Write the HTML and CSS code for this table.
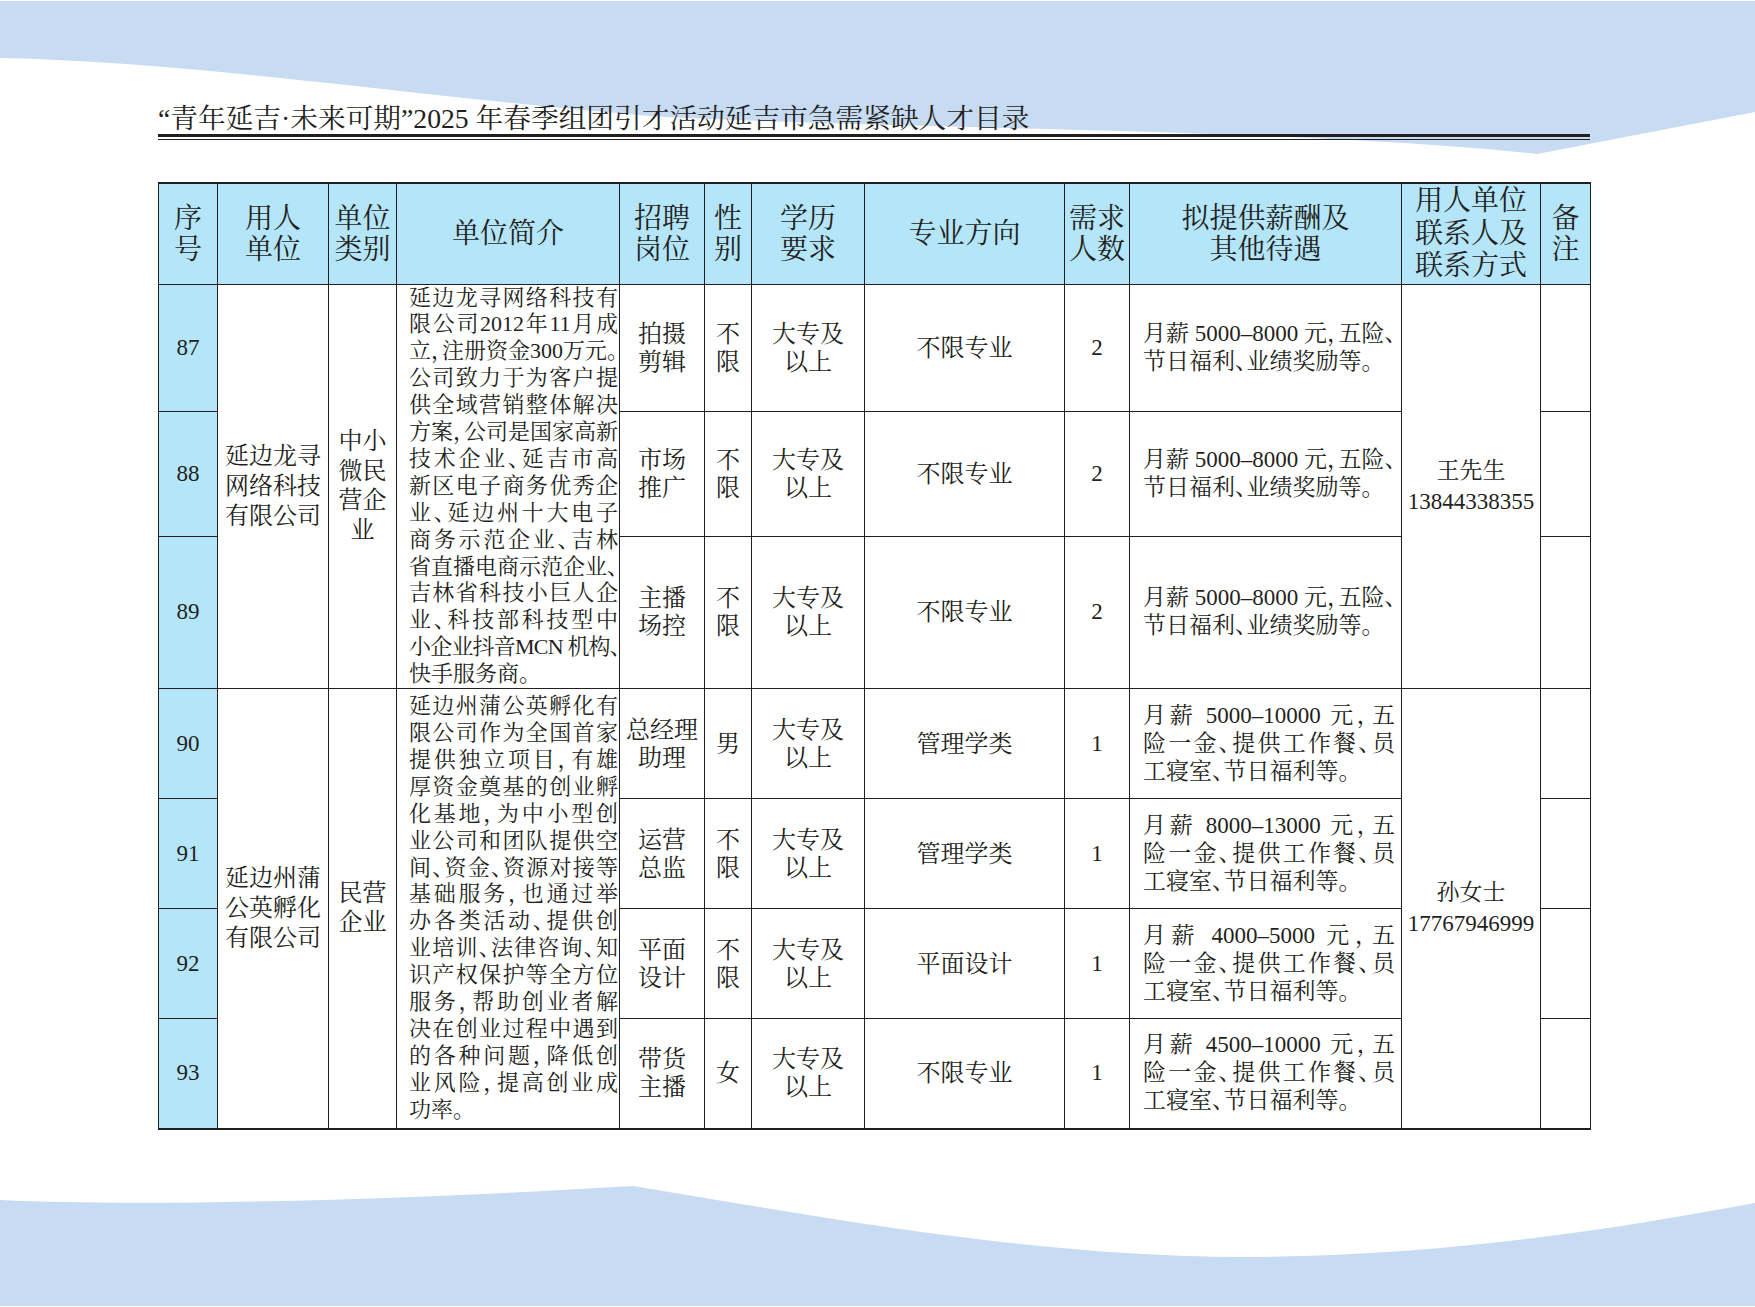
FILE: index.html
```html
<!DOCTYPE html>
<html lang="zh-CN">
<head>
<meta charset="utf-8">
<title>“青年延吉·未来可期”2025 年春季组团引才活动延吉市急需紧缺人才目录</title>
<link rel="stylesheet" href="styles.css">
</head>
<body>
<div class="page">
  <svg class="bg" width="1755" height="1307" viewBox="0 0 1755 1307" aria-hidden="true">
    <path class="wave" d="M0,1 H1755 V112 L1537,154 C1300,128 900,130 650,116 C400,95 200,62 0,58 Z"/>
    <path class="wave" d="M0,1200 C150,1207 400,1200 633,1186 C850,1222 1050,1258 1250,1257 C1450,1256 1620,1228 1755,1203 V1306 H0 Z"/>
  </svg>
  <div class="content">
    <h1 class="title">“青年延吉·未来可期”2025 年春季组团引才活动延吉市急需紧缺人才目录</h1>
    <div class="rule"></div>
    <table class="talent">
      <colgroup>
        <col class="c-seq"><col class="c-org"><col class="c-cat"><col class="c-desc"><col class="c-pos"><col class="c-sex"><col class="c-edu"><col class="c-major"><col class="c-num"><col class="c-pay"><col class="c-contact"><col class="c-note">
      </colgroup>
      <thead>
        <tr class="r-head">
          <th>序<br>号</th>
          <th>用人<br>单位</th>
          <th>单位<br>类别</th>
          <th>单位简介</th>
          <th>招聘<br>岗位</th>
          <th>性<br>别</th>
          <th>学历<br>要求</th>
          <th>专业方向</th>
          <th>需求<br>人数</th>
          <th>拟提供薪酬及<br>其他待遇</th>
          <th class="th3">用人单位<br>联系人及<br>联系方式</th>
          <th>备<br>注</th>
        </tr>
      </thead>
      <tbody>
        <tr class="r87">
          <td class="seq">87</td>
          <td class="org" rowspan="3">延边龙寻<br>网络科技<br>有限公司</td>
          <td class="cat" rowspan="3">中小<br>微民<br>营企<br>业</td>
          <td class="desc" rowspan="3">
            <span class="ln">延边龙寻网络科技有</span>
            <span class="ln">限公司2012年11月成</span>
            <span class="ln">立，注册资金300万元。</span>
            <span class="ln">公司致力于为客户提</span>
            <span class="ln">供全域营销整体解决</span>
            <span class="ln">方案，公司是国家高新</span>
            <span class="ln">技术企业、延吉市高</span>
            <span class="ln">新区电子商务优秀企</span>
            <span class="ln">业、延边州十大电子</span>
            <span class="ln">商务示范企业、吉林</span>
            <span class="ln">省直播电商示范企业、</span>
            <span class="ln">吉林省科技小巨人企</span>
            <span class="ln">业、科技部科技型中</span>
            <span class="ln tight">小企业抖音MCN 机构、</span>
            <span class="ln last">快手服务商。</span>
          </td>
          <td class="cell">拍摄<br>剪辑</td>
          <td class="cell">不<br>限</td>
          <td class="cell">大专及<br>以上</td>
          <td class="cell">不限专业</td>
          <td class="cell num">2</td>
          <td class="pay"><span class="ln">月薪 5000–8000 元，五险、</span><span class="ln last">节日福利、业绩奖励等。</span></td>
          <td class="contact" rowspan="3">王先生<br><span class="tel">13844338355</span></td>
          <td class="note"></td>
        </tr>
        <tr class="r88">
          <td class="seq">88</td>
          <td class="cell">市场<br>推广</td>
          <td class="cell">不<br>限</td>
          <td class="cell">大专及<br>以上</td>
          <td class="cell">不限专业</td>
          <td class="cell num">2</td>
          <td class="pay"><span class="ln">月薪 5000–8000 元，五险、</span><span class="ln last">节日福利、业绩奖励等。</span></td>
          <td class="note"></td>
        </tr>
        <tr class="r89">
          <td class="seq">89</td>
          <td class="cell">主播<br>场控</td>
          <td class="cell">不<br>限</td>
          <td class="cell">大专及<br>以上</td>
          <td class="cell">不限专业</td>
          <td class="cell num">2</td>
          <td class="pay"><span class="ln">月薪 5000–8000 元，五险、</span><span class="ln last">节日福利、业绩奖励等。</span></td>
          <td class="note"></td>
        </tr>
        <tr class="r9x">
          <td class="seq">90</td>
          <td class="org" rowspan="4">延边州蒲<br>公英孵化<br>有限公司</td>
          <td class="cat" rowspan="4">民营<br>企业</td>
          <td class="desc" rowspan="4">
            <span class="ln">延边州蒲公英孵化有</span>
            <span class="ln">限公司作为全国首家</span>
            <span class="ln">提供独立项目，有雄</span>
            <span class="ln">厚资金奠基的创业孵</span>
            <span class="ln">化基地，为中小型创</span>
            <span class="ln">业公司和团队提供空</span>
            <span class="ln">间、资金、资源对接等</span>
            <span class="ln">基础服务，也通过举</span>
            <span class="ln">办各类活动、提供创</span>
            <span class="ln">业培训、法律咨询、知</span>
            <span class="ln">识产权保护等全方位</span>
            <span class="ln">服务，帮助创业者解</span>
            <span class="ln">决在创业过程中遇到</span>
            <span class="ln">的各种问题，降低创</span>
            <span class="ln">业风险，提高创业成</span>
            <span class="ln last">功率。</span>
          </td>
          <td class="cell">总经理<br>助理</td>
          <td class="cell">男</td>
          <td class="cell">大专及<br>以上</td>
          <td class="cell">管理学类</td>
          <td class="cell num">1</td>
          <td class="pay"><span class="ln">月薪 5000–10000 元，五</span><span class="ln">险一金、提供工作餐、员</span><span class="ln last">工寝室、节日福利等。</span></td>
          <td class="contact" rowspan="4">孙女士<br><span class="tel">17767946999</span></td>
          <td class="note"></td>
        </tr>
        <tr class="r9x">
          <td class="seq">91</td>
          <td class="cell">运营<br>总监</td>
          <td class="cell">不<br>限</td>
          <td class="cell">大专及<br>以上</td>
          <td class="cell">管理学类</td>
          <td class="cell num">1</td>
          <td class="pay"><span class="ln">月薪 8000–13000 元，五</span><span class="ln">险一金、提供工作餐、员</span><span class="ln last">工寝室、节日福利等。</span></td>
          <td class="note"></td>
        </tr>
        <tr class="r9x">
          <td class="seq">92</td>
          <td class="cell">平面<br>设计</td>
          <td class="cell">不<br>限</td>
          <td class="cell">大专及<br>以上</td>
          <td class="cell">平面设计</td>
          <td class="cell num">1</td>
          <td class="pay"><span class="ln">月薪 4000–5000 元，五</span><span class="ln">险一金、提供工作餐、员</span><span class="ln last">工寝室、节日福利等。</span></td>
          <td class="note"></td>
        </tr>
        <tr class="r9x">
          <td class="seq">93</td>
          <td class="cell">带货<br>主播</td>
          <td class="cell">女</td>
          <td class="cell">大专及<br>以上</td>
          <td class="cell">不限专业</td>
          <td class="cell num">1</td>
          <td class="pay"><span class="ln">月薪 4500–10000 元，五</span><span class="ln">险一金、提供工作餐、员</span><span class="ln last">工寝室、节日福利等。</span></td>
          <td class="note"></td>
        </tr>
      </tbody>
    </table>
  </div>
</div>
</body>
</html>
```

FILE: styles.css
```css
html, body {
  margin: 0;
  padding: 0;
}

body {
  width: 1755px;
  height: 1307px;
  overflow: hidden;
  background: #ffffff;
  color: #231f20;
  font-family: "Liberation Serif", "Noto Serif CJK SC", "Noto Sans CJK SC", serif;
  font-feature-settings: "halt";
}

.page {
  position: relative;
  width: 1755px;
  height: 1307px;
  overflow: hidden;
}

.bg {
  position: absolute;
  left: 0;
  top: 0;
  z-index: 0;
}

.wave {
  fill: #c7dbf2;
}

.content {
  position: relative;
  z-index: 1;
  width: 1432px;
  padding: 103px 0 0 158px;
}

.title {
  margin: 0;
  font-size: 27.7px;
  line-height: 32px;
  font-weight: normal;
  white-space: nowrap;
}

.rule {
  height: 2px;
  margin-top: -1px;
  border-top: 3px solid #231f20;
  border-bottom: 1px solid #231f20;
}

.talent {
  margin-top: 42px;
  width: 1432px;
  table-layout: fixed;
  border-collapse: collapse;
  border-top: 2px solid #231f20;
  border-bottom: 2px solid #231f20;
}

.c-seq { width: 59px; }
.c-org { width: 111px; }
.c-cat { width: 68px; }
.c-desc { width: 223px; }
.c-pos { width: 85px; }
.c-sex { width: 47px; }
.c-edu { width: 113px; }
.c-major { width: 200px; }
.c-num { width: 65px; }
.c-pay { width: 272px; }
.c-contact { width: 139px; }
.c-note { width: 50px; }

.talent th,
.talent td {
  border: 1px solid #231f20;
  padding: 0;
  vertical-align: middle;
  text-align: center;
}

.talent th {
  background: #b4e5f9;
  font-weight: normal;
  font-size: 28px;
  line-height: 31px;
}

.talent th.th3 {
  line-height: 32.5px;
}

.r-head { height: 101px; }
.r87 { height: 127px; }
.r88 { height: 125px; }
.r89 { height: 152px; }
.r9x { height: 110px; }

.seq {
  background: #b4e5f9;
  font-size: 23px;
  line-height: 28px;
}

.org {
  font-size: 24px;
  line-height: 30px;
}

.cat {
  font-size: 24px;
  line-height: 29.5px;
}

.cell {
  font-size: 24px;
  line-height: 28px;
}

.num {
  font-size: 23px;
}

.ln {
  display: block;
  white-space: nowrap;
  text-align: justify;
  text-align-last: justify;
}

.ln.last {
  text-align-last: auto;
}

.ln.tight {
  letter-spacing: -0.8px;
}

.talent td.desc {
  padding: 0 1px 0 12px;
  font-size: 22px;
  line-height: 26.9px;
  text-align: left;
}

.talent td.pay {
  padding: 0 6px 0 13px;
  font-size: 23px;
  line-height: 28px;
  text-align: left;
}

.contact {
  font-size: 23px;
  line-height: 31px;
}

.tel {
  font-size: 23px;
}
```
